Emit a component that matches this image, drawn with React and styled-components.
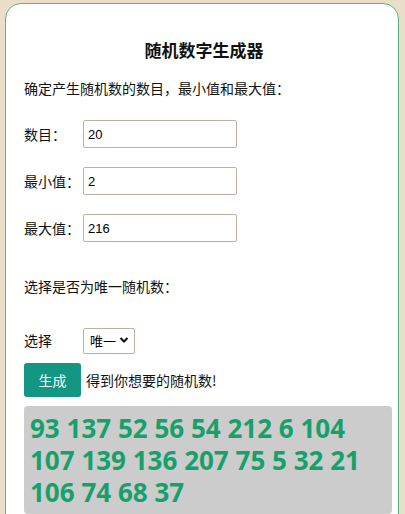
import React from 'react';
import styled, { createGlobalStyle } from 'styled-components';

const GlobalStyle = createGlobalStyle`
  html, body {
    margin: 0;
    padding: 0;
    background: #ebdec8;
    font-family: "Noto Sans CJK SC", "Noto Sans", sans-serif;
    color: #111;
  }
`;

const Card = styled.div`
  box-sizing: border-box;
  width: 394px;
  min-height: 540px;
  margin: 3px 0 0 5px;
  padding: 34px 6px 0 18px;
  background: #ffffff;
  border: 1px solid #5bb483;
  border-radius: 16px;
`;

const Title = styled.h3`
  margin: 0;
  padding-right: 8px;
  font-size: 17px;
  line-height: 24px;
  font-weight: bold;
  text-align: center;
`;

const Text = styled.p`
  margin: ${p => p.$top}px 0 0;
  font-size: 14px;
  line-height: 20px;
`;

const Row = styled.div`
  display: flex;
  align-items: center;
  height: ${p => p.$height || 28}px;
  margin-top: ${p => p.$top}px;
`;

const Label = styled.label`
  width: 59px;
  font-size: 14px;
`;

const Input = styled.input`
  box-sizing: border-box;
  width: 154px;
  height: 28px;
  margin: 0;
  padding: 0 4px;
  border: 1px solid #c3aea0;
  border-radius: 2px;
  font-family: "Liberation Sans", Arial, sans-serif;
  font-size: 13px;
  color: #000;
  outline: none;
`;

const SelectWrap = styled.div`
  position: relative;
  width: 52px;
  height: 26px;
`;

const Select = styled.select`
  box-sizing: border-box;
  width: 100%;
  height: 100%;
  margin: 0;
  padding: 0 0 0 6px;
  appearance: none;
  background: #fff;
  border: 1px solid #c3aea0;
  border-radius: 2px;
  font-family: "Noto Sans CJK SC", sans-serif;
  font-size: 13px;
  color: #000;
`;

const Chevron = styled.svg`
  position: absolute;
  right: 6px;
  top: 9px;
  pointer-events: none;
`;

const Button = styled.button`
  width: 57px;
  height: 34px;
  margin: 0 5px 0 0;
  border: none;
  border-radius: 3px;
  background: #139682;
  color: #fff;
  font-family: "Noto Sans CJK SC", sans-serif;
  font-size: 14px;
`;

const Hint = styled.span`
  font-size: 14px;
`;

const Result = styled.div`
  margin-top: 9px;
  padding: 6px 6px 6px 6px;
  background: #cccccc;
  border-radius: 4px;
  font-family: "Noto Sans", sans-serif;
  font-weight: bold;
  font-size: 26px;
  line-height: 32px;
  color: #17a06b;
`;

const numbers = [93, 137, 52, 56, 54, 212, 6, 104, 107, 139, 136, 207, 75, 5, 32, 21, 106, 74, 68, 37];

const App = () => (
    <React.Fragment>
        <GlobalStyle />
        <Card>
            <Title>随机数字生成器</Title>
            <Text $top={16}>确定产生随机数的数目，最小值和最大值：</Text>
            <Row $top={22}>
                <Label>数目：</Label>
                <Input defaultValue="20" />
            </Row>
            <Row $top={19}>
                <Label>最小值：</Label>
                <Input defaultValue="2" />
            </Row>
            <Row $top={19}>
                <Label>最大值：</Label>
                <Input defaultValue="216" />
            </Row>
            <Text $top={34}>选择是否为唯一随机数：</Text>
            <Row $top={31} $height={26}>
                <Label>选择</Label>
                <SelectWrap>
                    <Select defaultValue="unique">
                        <option value="unique">唯一</option>
                        <option value="repeat">可重复</option>
                    </Select>
                    <Chevron width="10" height="8" viewBox="0 0 10 8">
                        <path d="M1.5 2 L5 5.5 L8.5 2" fill="none" stroke="#111" strokeWidth="2" />
                    </Chevron>
                </SelectWrap>
            </Row>
            <Row $top={10} $height={34}>
                <Button type="button">生成</Button>
                <Hint>得到你想要的随机数!</Hint>
            </Row>
            <Result>{numbers.join(' ')}</Result>
        </Card>
    </React.Fragment>
);

export default App;
